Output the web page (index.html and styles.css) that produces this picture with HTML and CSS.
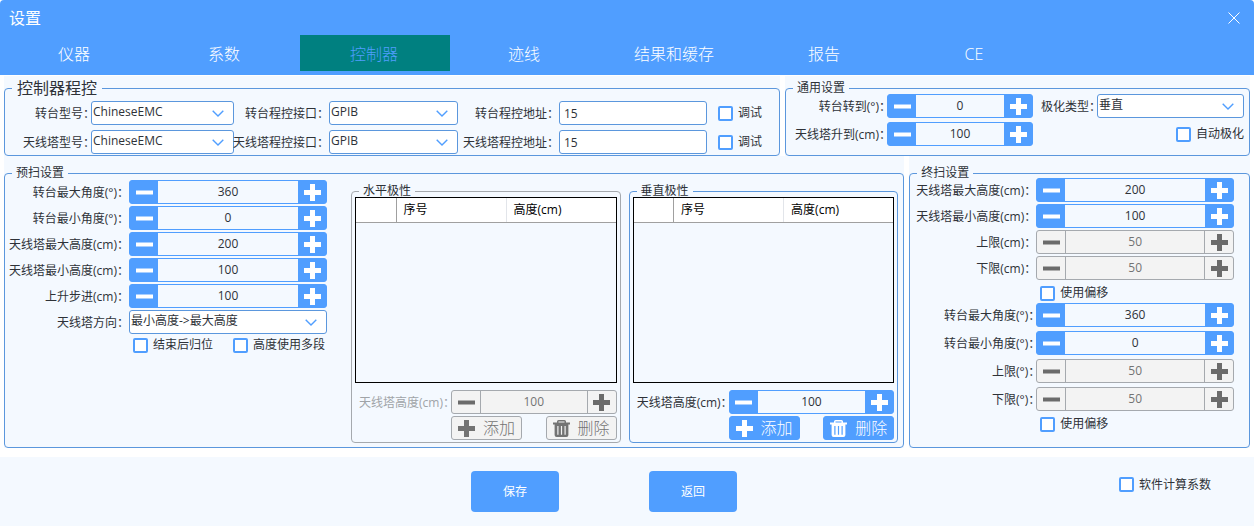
FILE: index.html
```html
<!DOCTYPE html>
<html lang="zh-CN">
<head>
<meta charset="utf-8">
<title>设置</title>
<link rel="stylesheet" href="styles.css">
</head>
<body>
<svg class="sprite" aria-hidden="true">
  <symbol id="minus" viewBox="0 0 17 17"><path d="M0 6.500h17v4H0z" fill="currentColor"/></symbol>
  <symbol id="plus" viewBox="0 0 17 17"><path d="M6 0h5v6h6v5h-6v6H6v-6H0V6h6z" fill="currentColor"/></symbol>
  <symbol id="chevron" viewBox="0 0 12 7"><path d="M.7.7 6 6 11.300.7" fill="none" stroke="currentColor" stroke-width="1.400"/></symbol>
  <symbol id="trash" viewBox="0 0 17 17"><path fill="currentColor" fill-rule="evenodd" d="M4 2.500V1.500Q4 0 5.500 0h6Q13 0 13 1.500v1h4v2h-1.600V15q0 2-2 2H3.600q-2 0-2-2V4.500H0v-2zM5.500 2.500h6v-1h-6zM4.300 6v8.800h1.200V6zM7.900 6v8.800h1.200V6zM11.500 6v8.800h1.200V6z"/></symbol>
</svg>

<header class="header">
  <div class="titlebar">
    <h1 class="title">设置</h1>
    <button class="close" type="button" aria-label="关闭"><svg viewBox="0 0 12 12" width="12" height="12"><path d="M.5.5l11 11M11.500.5l-11 11" stroke="currentColor" fill="none"/></svg></button>
  </div>
  <nav class="tabs">
    <button class="tab" type="button">仪器</button>
    <button class="tab" type="button">系数</button>
    <button class="tab tab-active" type="button">控制器</button>
    <button class="tab" type="button">迹线</button>
    <button class="tab" type="button">结果和缓存</button>
    <button class="tab" type="button">报告</button>
    <button class="tab" type="button">CE</button>
  </nav>
</header>

<main class="main">
  <div class="row row-top">
    <section class="panel">
      <fieldset class="group">
        <legend class="legend legend-large">控制器程控</legend>
        <div class="control-grid">
          <label class="label tight" for="tt-model">转台型号：</label>
          <div class="select"><select id="tt-model"><option>ChineseEMC</option></select><svg><use href="#chevron"/></svg></div>
          <label class="label" for="tt-port">转台程控接口：</label>
          <div class="select"><select id="tt-port"><option>GPIB</option></select><svg><use href="#chevron"/></svg></div>
          <label class="label" for="tt-addr">转台程控地址：</label>
          <input class="text" id="tt-addr" type="text" value="15">
          <label class="check"><input type="checkbox">调试</label>

          <label class="label tight" for="at-model">天线塔型号：</label>
          <div class="select"><select id="at-model"><option>ChineseEMC</option></select><svg><use href="#chevron"/></svg></div>
          <label class="label" for="at-port">天线塔程控接口：</label>
          <div class="select"><select id="at-port"><option>GPIB</option></select><svg><use href="#chevron"/></svg></div>
          <label class="label" for="at-addr">天线塔程控地址：</label>
          <input class="text" id="at-addr" type="text" value="15">
          <label class="check"><input type="checkbox">调试</label>
        </div>
      </fieldset>
    </section>

    <section class="panel">
      <fieldset class="group">
        <legend class="legend">通用设置</legend>
        <div class="general-grid">
          <label class="label tight" for="g-turn">转台转到(°)：</label>
          <div class="spinner"><button type="button" aria-label="减"><svg><use href="#minus"/></svg></button><input id="g-turn" type="text" value="0"><button type="button" aria-label="加"><svg><use href="#plus"/></svg></button></div>
          <label class="label tight" for="g-pol">极化类型：</label>
          <div class="select"><select id="g-pol"><option>垂直</option></select><svg><use href="#chevron"/></svg></div>

          <label class="label tight" for="g-rise">天线塔升到(cm)：</label>
          <div class="spinner"><button type="button" aria-label="减"><svg><use href="#minus"/></svg></button><input id="g-rise" type="text" value="100"><button type="button" aria-label="加"><svg><use href="#plus"/></svg></button></div>
          <label class="check check-end"><input type="checkbox">自动极化</label>
        </div>
      </fieldset>
    </section>
  </div>

  <div class="row row-bottom">
    <section class="panel">
      <fieldset class="group">
        <legend class="legend">预扫设置</legend>
        <div class="prescan">
          <div class="prescan-form">
            <div class="form">
              <label class="label" for="p1">转台最大角度(°)：</label>
              <div class="spinner"><button type="button" aria-label="减"><svg><use href="#minus"/></svg></button><input id="p1" type="text" value="360"><button type="button" aria-label="加"><svg><use href="#plus"/></svg></button></div>
              <label class="label" for="p2">转台最小角度(°)：</label>
              <div class="spinner"><button type="button" aria-label="减"><svg><use href="#minus"/></svg></button><input id="p2" type="text" value="0"><button type="button" aria-label="加"><svg><use href="#plus"/></svg></button></div>
              <label class="label" for="p3">天线塔最大高度(cm)：</label>
              <div class="spinner"><button type="button" aria-label="减"><svg><use href="#minus"/></svg></button><input id="p3" type="text" value="200"><button type="button" aria-label="加"><svg><use href="#plus"/></svg></button></div>
              <label class="label" for="p4">天线塔最小高度(cm)：</label>
              <div class="spinner"><button type="button" aria-label="减"><svg><use href="#minus"/></svg></button><input id="p4" type="text" value="100"><button type="button" aria-label="加"><svg><use href="#plus"/></svg></button></div>
              <label class="label" for="p5">上升步进(cm)：</label>
              <div class="spinner"><button type="button" aria-label="减"><svg><use href="#minus"/></svg></button><input id="p5" type="text" value="100"><button type="button" aria-label="加"><svg><use href="#plus"/></svg></button></div>
              <label class="label" for="p6">天线塔方向：</label>
              <div class="select"><select id="p6"><option>最小高度-&gt;最大高度</option></select><svg><use href="#chevron"/></svg></div>
            </div>
            <div class="checks">
              <label class="check"><input type="checkbox">结束后归位</label>
              <label class="check"><input type="checkbox">高度使用多段</label>
            </div>
          </div>

          <fieldset class="group polar" disabled>
            <legend class="legend legend-small">水平极性</legend>
            <div class="table-box">
              <table class="table">
                <colgroup><col class="col-mark"><col class="col-no"><col></colgroup>
                <thead><tr><th></th><th>序号</th><th>高度(cm)</th></tr></thead>
              </table>
            </div>
            <div class="polar-grid">
              <label class="label tight" for="h-height">天线塔高度(cm)：</label>
              <div class="spinner"><button type="button" aria-label="减"><svg><use href="#minus"/></svg></button><input id="h-height" type="text" value="100"><button type="button" aria-label="加"><svg><use href="#plus"/></svg></button></div>
              <div class="actions">
                <button class="action" type="button"><svg><use href="#plus"/></svg>添加</button>
                <button class="action" type="button"><svg><use href="#trash"/></svg>删除</button>
              </div>
            </div>
          </fieldset>

          <fieldset class="group polar">
            <legend class="legend legend-small">垂直极性</legend>
            <div class="table-box">
              <table class="table">
                <colgroup><col class="col-mark"><col class="col-no"><col></colgroup>
                <thead><tr><th></th><th>序号</th><th>高度(cm)</th></tr></thead>
              </table>
            </div>
            <div class="polar-grid">
              <label class="label tight" for="v-height">天线塔高度(cm)：</label>
              <div class="spinner"><button type="button" aria-label="减"><svg><use href="#minus"/></svg></button><input id="v-height" type="text" value="100"><button type="button" aria-label="加"><svg><use href="#plus"/></svg></button></div>
              <div class="actions">
                <button class="action" type="button"><svg><use href="#plus"/></svg>添加</button>
                <button class="action" type="button"><svg><use href="#trash"/></svg>删除</button>
              </div>
            </div>
          </fieldset>
        </div>
      </fieldset>
    </section>

    <section class="panel">
      <fieldset class="group">
        <legend class="legend">终扫设置</legend>
        <div class="final">
          <div class="form">
            <label class="label" for="f1">天线塔最大高度(cm)：</label>
            <div class="spinner"><button type="button" aria-label="减"><svg><use href="#minus"/></svg></button><input id="f1" type="text" value="200"><button type="button" aria-label="加"><svg><use href="#plus"/></svg></button></div>
            <label class="label" for="f2">天线塔最小高度(cm)：</label>
            <div class="spinner"><button type="button" aria-label="减"><svg><use href="#minus"/></svg></button><input id="f2" type="text" value="100"><button type="button" aria-label="加"><svg><use href="#plus"/></svg></button></div>
            <label class="label" for="f3">上限(cm)：</label>
            <div class="spinner"><button type="button" aria-label="减" disabled><svg><use href="#minus"/></svg></button><input id="f3" type="text" value="50" disabled><button type="button" aria-label="加" disabled><svg><use href="#plus"/></svg></button></div>
            <label class="label" for="f4">下限(cm)：</label>
            <div class="spinner"><button type="button" aria-label="减" disabled><svg><use href="#minus"/></svg></button><input id="f4" type="text" value="50" disabled><button type="button" aria-label="加" disabled><svg><use href="#plus"/></svg></button></div>
          </div>
          <div class="checks"><label class="check"><input type="checkbox">使用偏移</label></div>
          <div class="form form-loose">
            <label class="label tight" for="f5">转台最大角度(°)：</label>
            <div class="spinner"><button type="button" aria-label="减"><svg><use href="#minus"/></svg></button><input id="f5" type="text" value="360"><button type="button" aria-label="加"><svg><use href="#plus"/></svg></button></div>
            <label class="label tight" for="f6">转台最小角度(°)：</label>
            <div class="spinner"><button type="button" aria-label="减"><svg><use href="#minus"/></svg></button><input id="f6" type="text" value="0"><button type="button" aria-label="加"><svg><use href="#plus"/></svg></button></div>
            <label class="label tight" for="f7">上限(°)：</label>
            <div class="spinner"><button type="button" aria-label="减" disabled><svg><use href="#minus"/></svg></button><input id="f7" type="text" value="50" disabled><button type="button" aria-label="加" disabled><svg><use href="#plus"/></svg></button></div>
            <label class="label tight" for="f8">下限(°)：</label>
            <div class="spinner"><button type="button" aria-label="减" disabled><svg><use href="#minus"/></svg></button><input id="f8" type="text" value="50" disabled><button type="button" aria-label="加" disabled><svg><use href="#plus"/></svg></button></div>
          </div>
          <div class="checks"><label class="check"><input type="checkbox">使用偏移</label></div>
        </div>
      </fieldset>
    </section>
  </div>
</main>

<footer class="footer">
  <div class="footer-buttons">
    <button class="primary" type="button">保存</button>
    <button class="primary" type="button">返回</button>
  </div>
  <label class="check"><input type="checkbox">软件计算系数</label>
</footer>
</body>
</html>
```

FILE: styles.css
```css
:root {
  --blue: #509eff;
  --line: #5b97dd;
  --pale: #f4f9ff;
  --text: #2e3238;
  --gray-line: #a5a9ae;
  --gray-fill: #f3f3f3;
  --gray-text: #737373;
}

* {
  box-sizing: border-box;
}

body {
  margin: 0;
  min-height: 100vh;
  display: flex;
  flex-direction: column;
  background: #fff;
  color: var(--text);
  font: 12px/16px "Open Sans", "Noto Sans CJK SC", sans-serif;
}

button,
input,
select {
  margin: 0;
  padding: 0;
  border: 0;
  color: inherit;
  font: inherit;
}

.sprite {
  display: none;
}

/* Header */
.header {
  padding-bottom: 4px;
  background: var(--blue);
  border-radius: 4px 4px 0 0;
  color: #fff;
}

.titlebar {
  display: flex;
  align-items: center;
  justify-content: space-between;
  height: 35px;
  padding: 0 14px 0 9px;
}

.title {
  margin: 0;
  font-size: 16px;
  font-weight: 400;
}

.close {
  display: flex;
  background: none;
}

.tabs {
  display: flex;
}

.tab {
  width: 150px;
  height: 36px;
  padding: 2px 2px 0 0;
  background: none;
  font-size: 16px;
  font-weight: 300;
}

.tab-active {
  background: #008080;
  color: var(--blue);
}

/* Panels */
.main {
  flex: 1;
  padding: 1px 4px 9px;
}

.row {
  display: grid;
  gap: 5px;
}

.row-top {
  grid-template-columns: 776fr 465fr;
}

.row-bottom {
  grid-template-columns: 901fr 341fr;
}

.panel {
  display: grid;
  background: var(--pale);
}

.row-bottom .panel {
  padding-top: 5px;
}

.group {
  min-width: 0;
  margin: 0;
  padding: 0;
  border: 1px solid var(--line);
  border-radius: 4px;
}

.legend {
  margin-left: 7px;
  padding: 0 4px;
  line-height: 24px;
}

.legend-large {
  padding: 0 5px;
  font-size: 16px;
}

.legend-small {
  line-height: 12px;
}

.label {
  display: flex;
  align-items: center;
  justify-content: flex-end;
  padding-top: 2px;
  white-space: nowrap;
}

.tight {
  margin-right: -4px;
}

.control-grid {
  display: grid;
  grid-template-columns: 86px 143fr 95px 129fr 101px 148fr 72px;
  grid-auto-rows: 24px;
  row-gap: 5px;
  padding: 1px 0;
}

.control-grid .check {
  padding-left: 11px;
}

.general-grid {
  display: grid;
  grid-template-columns: 101px 146fr 64px 147fr;
  grid-auto-rows: 24px;
  row-gap: 4px;
  padding-right: 5px;
}

.row-top .legend:not(.legend-large) {
  margin-bottom: -6px;
}

.row-bottom .panel > .group > .legend {
  margin-bottom: -5px;
}

/* Controls */
.select {
  display: grid;
  min-width: 0;
}

.select > * {
  grid-area: 1 / 1;
}

.select select,
.text {
  width: 100%;
  min-width: 0;
  height: 24px;
  border: 1px solid var(--line);
  border-radius: 3px;
  background: #fff;
}

.select select {
  padding: 0 24px 2px 1px;
  appearance: none;
}

.select svg {
  place-self: center end;
  width: 12px;
  height: 7px;
  margin-right: 10px;
  color: var(--blue);
  pointer-events: none;
}

.text {
  padding: 0 4px;
}

.spinner {
  display: flex;
  min-width: 0;
  height: 24px;
  border: 1px solid var(--blue);
  border-radius: 3px;
  background: var(--blue);
}

.spinner button {
  display: flex;
  flex: 0 0 28px;
  align-items: center;
  justify-content: center;
  background: none;
  color: #fff;
}

.spinner svg {
  width: 17px;
  height: 17px;
}

.spinner input {
  flex: 1;
  width: 0;
  min-width: 0;
  padding-bottom: 1px;
  background: var(--pale);
  text-align: center;
}

.spinner:has(:disabled) {
  border-color: var(--gray-line);
  background: var(--gray-fill);
}

.spinner button:disabled {
  color: #6b6b6b;
}

.spinner input:disabled {
  border: solid var(--gray-line);
  border-width: 0 1px;
  background: var(--gray-fill);
  color: var(--gray-text);
}

.check {
  display: flex;
  align-items: center;
  gap: 5px;
  white-space: nowrap;
}

.check input {
  flex: none;
  width: 15px;
  height: 15px;
  border: 2px solid var(--blue);
  border-radius: 2px;
  background: #fff;
  appearance: none;
}

.check input:checked {
  background: var(--blue);
}

.check-end {
  grid-column: 3 / 5;
  justify-content: flex-end;
}

/* Scan forms */
.form {
  display: grid;
  grid-template-columns: 124px minmax(0, 1fr);
  grid-auto-rows: 24px;
  row-gap: 2px;
}

.form-loose {
  row-gap: 4px;
}

.prescan {
  display: grid;
  grid-template-columns: 322px 286fr 270fr;
  column-gap: 8px;
  padding: 0 5px 4px 0;
}

.prescan-form .checks {
  display: flex;
  gap: 20px;
  padding: 3px 0 0 128px;
}

.polar {
  margin: 5px 0 0;
}

.prescan-form + .polar {
  margin-left: 16px;
}

.table-box {
  height: 186px;
  margin: 0 3px;
  border: 1px solid #000;
  background: var(--pale);
}

.table {
  width: 100%;
  border-collapse: collapse;
  table-layout: fixed;
  background: #fff;
  color: #000;
}

.table th {
  height: 24px;
  padding: 0 7px;
  border-bottom: 1px solid #a0a0a0;
  border-right: 1px solid #e2e5ea;
  font-weight: 400;
  text-align: left;
}

.table th:first-child {
  border-right-color: #a0a0a0;
}

.table th:last-child {
  border-right: 0;
}

.col-mark {
  width: 40px;
}

.col-no {
  width: 110px;
}

.polar-grid {
  display: grid;
  grid-template-columns: 96px minmax(0, 1fr);
  row-gap: 2px;
  padding: 7px 3px 2px;
}

.actions {
  display: flex;
  grid-column: 2;
  justify-content: space-between;
}

.action {
  display: flex;
  align-items: center;
  justify-content: center;
  gap: 8px;
  width: 71px;
  height: 24px;
  border: 1px solid var(--blue);
  border-radius: 3px;
  background: var(--blue);
  color: #fff;
  font-size: 16px;
  font-weight: 300;
}

.action svg {
  width: 17px;
  height: 17px;
}

.polar:disabled {
  border-color: var(--gray-line);
}

.polar:disabled .label {
  color: #a0a4a8;
}

.action:disabled {
  border-color: var(--gray-line);
  background: var(--gray-fill);
  color: var(--gray-text);
}

.final {
  margin-top: -2px;
  padding: 0 15px 13px 2px;
}

.final .checks {
  padding: 5px 0 2px 128px;
}

/* Footer */
.footer {
  display: grid;
  grid-template-columns: 471fr 266px 517fr;
  align-items: center;
  min-height: 69px;
  padding-bottom: 0;
  background: var(--pale);
}

.footer-buttons {
  display: flex;
  grid-column: 2;
  justify-content: space-between;
}

.footer .check {
  justify-content: flex-end;
  padding: 0 43px 14px 0;
}

.primary {
  width: 88px;
  height: 41px;
  border-radius: 4px;
  background: var(--blue);
  color: #fff;
}
```
